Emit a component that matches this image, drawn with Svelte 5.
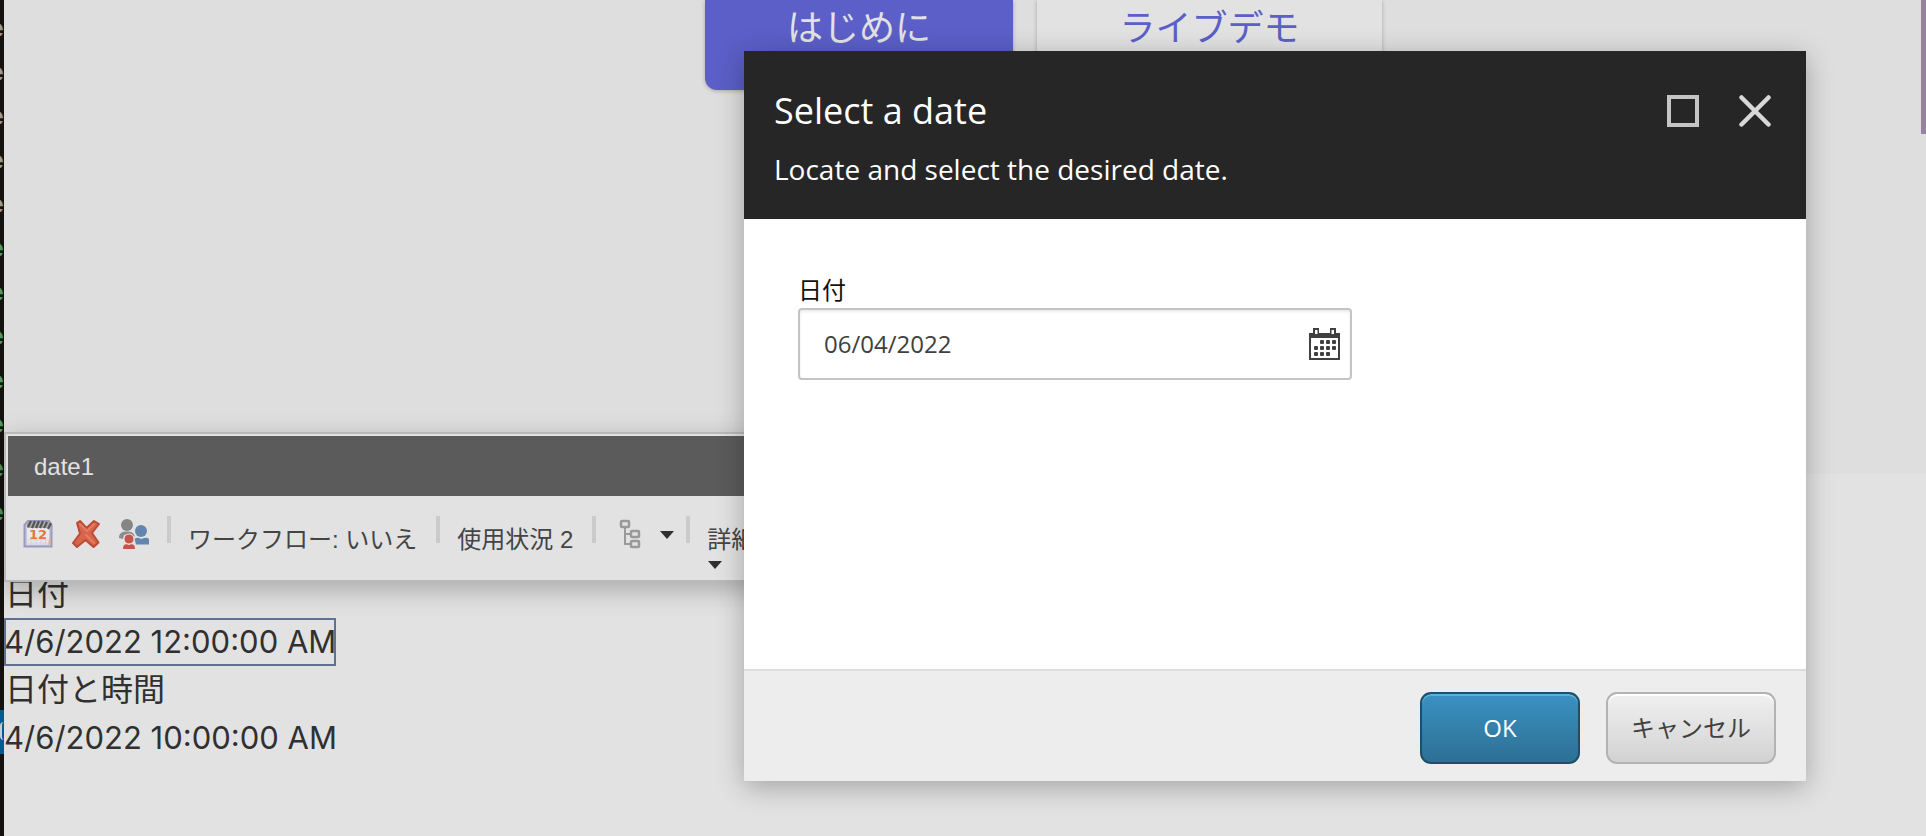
<script lang="ts">
  let dateValue = $state('06/04/2022');
  const codeLines = ['grey', 'grey', 'grey', 'grey', 'grey', 'green', 'green', 'green', 'green', 'green', 'green', 'green'];
  const dots = [
    [11, 12], [17, 12], [23, 12],
    [5, 18], [11, 18], [17, 18], [23, 18],
    [5, 24], [11, 24], [17, 24]
  ];
</script>

<div class="screen">
  <aside class="code" aria-hidden="true">
    {#each codeLines as tone}
      <span class="line {tone}">e</span>
    {/each}
    <span class="selected"><i></i></span>
  </aside>

  <main class="page">
    <section class="hero">
      <a class="cta primary" href="#start">はじめに</a>
      <a class="cta" href="#demo">ライブデモ</a>
      <div class="edge"></div>
    </section>

    <section class="fields">
      <p class="ja">日付</p>
      <p><span class="editing">4/6/2022 12:00:00 AM</span></p>
      <p class="ja">日付と時間</p>
      <p>4/6/2022 10:00:00 AM</p>
    </section>

    <div class="chrome">
      <div class="chrome-title">date1</div>
      <div class="tools">
        <button class="tool" aria-label="Insert date">
          <svg width="30" height="30" viewBox="0 0 30 30">
            <path d="M1.500 6 5 2H26L28.500 6V27.500H1.500Z" fill="#c9c9dc" stroke="#9a9abf" stroke-width="2" />
            <path d="M4 8H26V25.500H4Z" fill="#e8e8ec" />
            <path d="M4 21H26M4 24H26M8 20V25.500M13 20V25.500M18 20V25.500M22.500 20V25.500" stroke="#d2d2df" />
            <path d="M4 3H27V9H4Z" fill="#a8a8a8" />
            <path d="M5 8 8 2M9 9 12 2M13 9 16 2M17 9 20 2M21 9 24 3M25 10 28 4" stroke="#565656" stroke-width="2.200" />
            <path d="m26 20 2 2-3 5Z" fill="#e3b27d" />
            <text x="15" y="20" text-anchor="middle" font-family="DejaVu Sans" font-size="13" font-weight="700" fill="#e3773c">12</text>
          </svg>
        </button>
        <button class="tool" aria-label="Clear">
          <svg width="30" height="30" viewBox="0 0 30 30">
            <path d="M6 4 9 2 15.500 9 23 2 28 5 21 14 27.500 23.500 22.500 28 14.500 21 6 28 2 24 9 14.500Z" fill="#d8654b" stroke="#bd4a37" stroke-width="2" stroke-linejoin="round" />
            <path d="m9 5 7 7 7-7M15 16l8 8" fill="none" stroke="#e27f62" stroke-width="2" stroke-linecap="round" />
          </svg>
        </button>
        <button class="tool" aria-label="Personalize">
          <svg width="30" height="30" viewBox="0 0 30 30">
            <circle cx="8" cy="6" r="6" fill="#858585" />
            <path d="M0 19C0 14 3 12.500 8 12.500S15 14 16 18L12 15 5 16 4 20Z" fill="#8c8c8c" />
            <circle cx="22" cy="12" r="6" fill="#6286ae" />
            <path d="M15.500 20C18 18 20 19 22 20 24 19 28 17.500 30 20V25.500H17Z" fill="#6286ae" />
            <circle cx="10" cy="20" r="5" fill="#c85349" stroke="#e2e2e2" />
            <path d="M4 30C4 25 7 24.500 10 26 13 24.500 16 25 16 30Z" fill="#c85349" />
          </svg>
        </button>
        <span class="sep first"></span>
        <button class="text">ワークフロー: いいえ</button>
        <span class="sep"></span>
        <button class="text">使用状況 2</button>
        <span class="sep"></span>
        <button class="tool tree" aria-label="Navigate">
          <svg width="24" height="30" viewBox="0 0 24 30" fill="none" stroke="#999" stroke-width="2.500">
            <rect x="2" y="2" width="8" height="6" rx="1" />
            <rect x="12" y="12" width="8" height="6" rx="1" />
            <rect x="12" y="22" width="8" height="6" rx="1" />
            <path d="M6 8V25H12M6 15H12" stroke-width="2" />
          </svg>
          <svg width="16" height="30" viewBox="0 0 16 30"><path d="M1 12H15L8 20Z" fill="#303030" /></svg>
        </button>
        <span class="sep"></span>
        <button class="text more">詳細
          <svg width="16" height="10" viewBox="0 0 16 10"><path d="M1 1H15L8 9Z" fill="#303030" /></svg>
        </button>
      </div>
    </div>
  </main>

  <div class="overlay">
    <div class="dialog" role="dialog" aria-labelledby="dialog-title" aria-modal="true">
      <header>
        <div>
          <h1 id="dialog-title">Select a date</h1>
          <p>Locate and select the desired date.</p>
        </div>
        <div class="window-buttons">
          <button aria-label="Maximize">
            <svg width="32" height="32" viewBox="0 0 32 32"><path d="M2 2H30V30H2Z" fill="none" stroke="#c5c5c5" stroke-width="4" /></svg>
          </button>
          <button aria-label="Close">
            <svg width="32" height="32" viewBox="0 0 32 32"><path d="M2.500 2.500 29.500 29.500M29.500 2.500 2.500 29.500" stroke="#d8d8d8" stroke-width="4.500" stroke-linecap="round" /></svg>
          </button>
        </div>
      </header>
      <div class="body">
        <label for="date">日付</label>
        <div class="date-box">
          <input id="date" type="text" bind:value={dateValue} />
          <button aria-label="Open calendar">
            <svg width="31" height="32" viewBox="0 0 31 32">
              <path d="M0 5H31V32H0Z" fill="#404040" />
              <path d="M2 10H29V30H2Z" fill="#fff" />
              <path d="M4 0H10V7H4ZM21 0H27V7H21Z" fill="#404040" />
              <path d="M6 2H8.500V6H6ZM22.500 2H25V6H22.500Z" fill="#fff" />
              {#each dots as [x, y]}
                <rect {x} {y} width="4" height="4" rx="1" fill="#404040" />
              {/each}
            </svg>
          </button>
        </div>
      </div>
      <footer>
        <button class="btn ok">OK</button>
        <button class="btn">キャンセル</button>
      </footer>
    </div>
  </div>
</div>

<style>
  :global(body) { margin: 0; background: #e2e2e2; }
  * { box-sizing: border-box; }
  p, h1 { margin: 0; font-weight: 400; }
  button { margin: 0; padding: 0; border: 0; background: none; color: inherit; font: inherit; }
  svg { display: block; }

  .screen {
    position: relative;
    display: flex;
    min-height: 100vh;
    overflow: hidden;
    font-family: "Open Sans", "Noto Sans CJK JP", sans-serif;
  }
  .code {
    display: flex;
    flex: none;
    flex-direction: column;
    width: 4px;
    padding-top: 8px;
    overflow: hidden;
    background: #14120f;
    font: 700 26px/44px "Liberation Mono", monospace;
  }
  .line { display: flex; justify-content: flex-end; height: 44px; }
  .grey { color: #999; }
  .green { color: #4f9a68; }
  .selected { height: 44px; margin-top: 174px; padding-top: 12px; background: #005b94; }
  .selected i { display: block; width: 8px; height: 18px; border-left: 2px solid #ccc; border-radius: 8px; }

  .page { position: relative; flex: 1; min-width: 0; }
  .hero {
    display: flex;
    align-items: flex-start;
    gap: 24px;
    height: 474px;
    padding-left: 701px;
    background: #dededf;
  }
  .cta {
    flex: none;
    width: 345px;
    height: 90px;
    border-radius: 0 0 12px 12px;
    background: #e2e2e2;
    box-shadow: 0 1px 4px rgba(0, 0, 0, 0.25);
    color: #5b5fc7;
    font: 36px/50px "Noto Sans CJK JP", sans-serif;
    text-align: center;
    text-decoration: none;
  }
  .primary { width: 308px; background: #5b5fc7; color: #e2e2e2; }
  .edge { flex: none; width: 5px; height: 134px; margin-left: auto; background: #96849f; }

  .fields {
    padding-top: 96px;
    color: #303030;
    font: 31px/48px Inter, "Noto Sans CJK JP", sans-serif;
  }
  .ja { padding-left: 1px; font-size: 32px; }
  .editing { display: inline-block; outline: 2px solid #5f7190; outline-offset: -2px; }

  .chrome {
    position: absolute;
    top: 432px;
    left: 0;
    width: 60%;
    border: 2px solid #b9b9b9;
    background: #e2e2e2;
    box-shadow: 0 8px 24px rgba(0, 0, 0, 0.25);
    color: #444;
    font: 24px/36px "Liberation Sans", "Noto Sans CJK JP", sans-serif;
  }
  .chrome-title {
    margin: 2px 2px 0;
    height: 60px;
    padding-left: 26px;
    background: #5b5b5b;
    color: #e2e2e2;
    line-height: 62px;
  }
  .tools { display: flex; align-items: flex-start; height: 84px; padding: 20px 17px 0; }
  .tool { margin: 3px 18px 0 0; }
  .sep { width: 4px; height: 27px; margin: 0 17px 0 19px; background: #cbcbcb; }
  .sep.first { margin-left: 0; }
  .text { margin-top: 6px; white-space: nowrap; }
  .tree { display: flex; gap: 16px; margin: 3px -8px 0 6px; }
  .more { text-align: left; }
  .more svg { margin-top: 2px; }

  .overlay { position: absolute; inset: 0; padding: 51px 120px 0 744px; }
  .dialog { background: #fff; box-shadow: 0 6px 26px rgba(0, 0, 0, 0.28); }
  header {
    display: flex;
    justify-content: space-between;
    height: 168px;
    padding: 32px 35px 0 30px;
    background: #262626;
    color: #fff;
  }
  h1 { font-size: 36px; line-height: 56px; }
  header p { font-size: 28px; line-height: 60px; }
  .window-buttons { display: flex; align-items: flex-start; gap: 40px; padding-top: 12px; }
  .body { height: 450px; padding: 52px 54px 0; }
  label { display: block; height: 37px; color: #111; font: 24px/36px "Noto Sans CJK JP", sans-serif; }
  .date-box {
    display: flex;
    align-items: center;
    width: 58.1%;
    height: 72px;
    padding-right: 10px;
    border: 2px solid #c4c4c4;
    border-radius: 4px;
    box-shadow: inset 0 2px 3px rgba(0, 0, 0, 0.08);
  }
  input {
    flex: 1;
    min-width: 0;
    padding: 0 0 0 24px;
    border: 0;
    outline: 0;
    background: none;
    color: #404040;
    font: 24px/36px "Open Sans", sans-serif;
  }
  footer {
    display: flex;
    justify-content: flex-end;
    gap: 26px;
    height: 112px;
    padding: 21px 30px 0;
    border-top: 2px solid #dcdddc;
    background: #ededed;
  }
  .btn {
    height: 72px;
    padding: 0 23px;
    border: 2px solid #b3b3b3;
    border-radius: 11px;
    background: linear-gradient(#f0f0f0, #d2d2d2);
    box-shadow: inset 0 2px 0 #fff;
    color: #404040;
    font-size: 24px;
    line-height: 36px;
  }
  .ok {
    width: 160px;
    border-color: #1f4f68;
    background: linear-gradient(#3a92c2, #2d7094);
    box-shadow: inset 0 2px 0 #59b0d9;
    color: #fff;
  }
</style>
